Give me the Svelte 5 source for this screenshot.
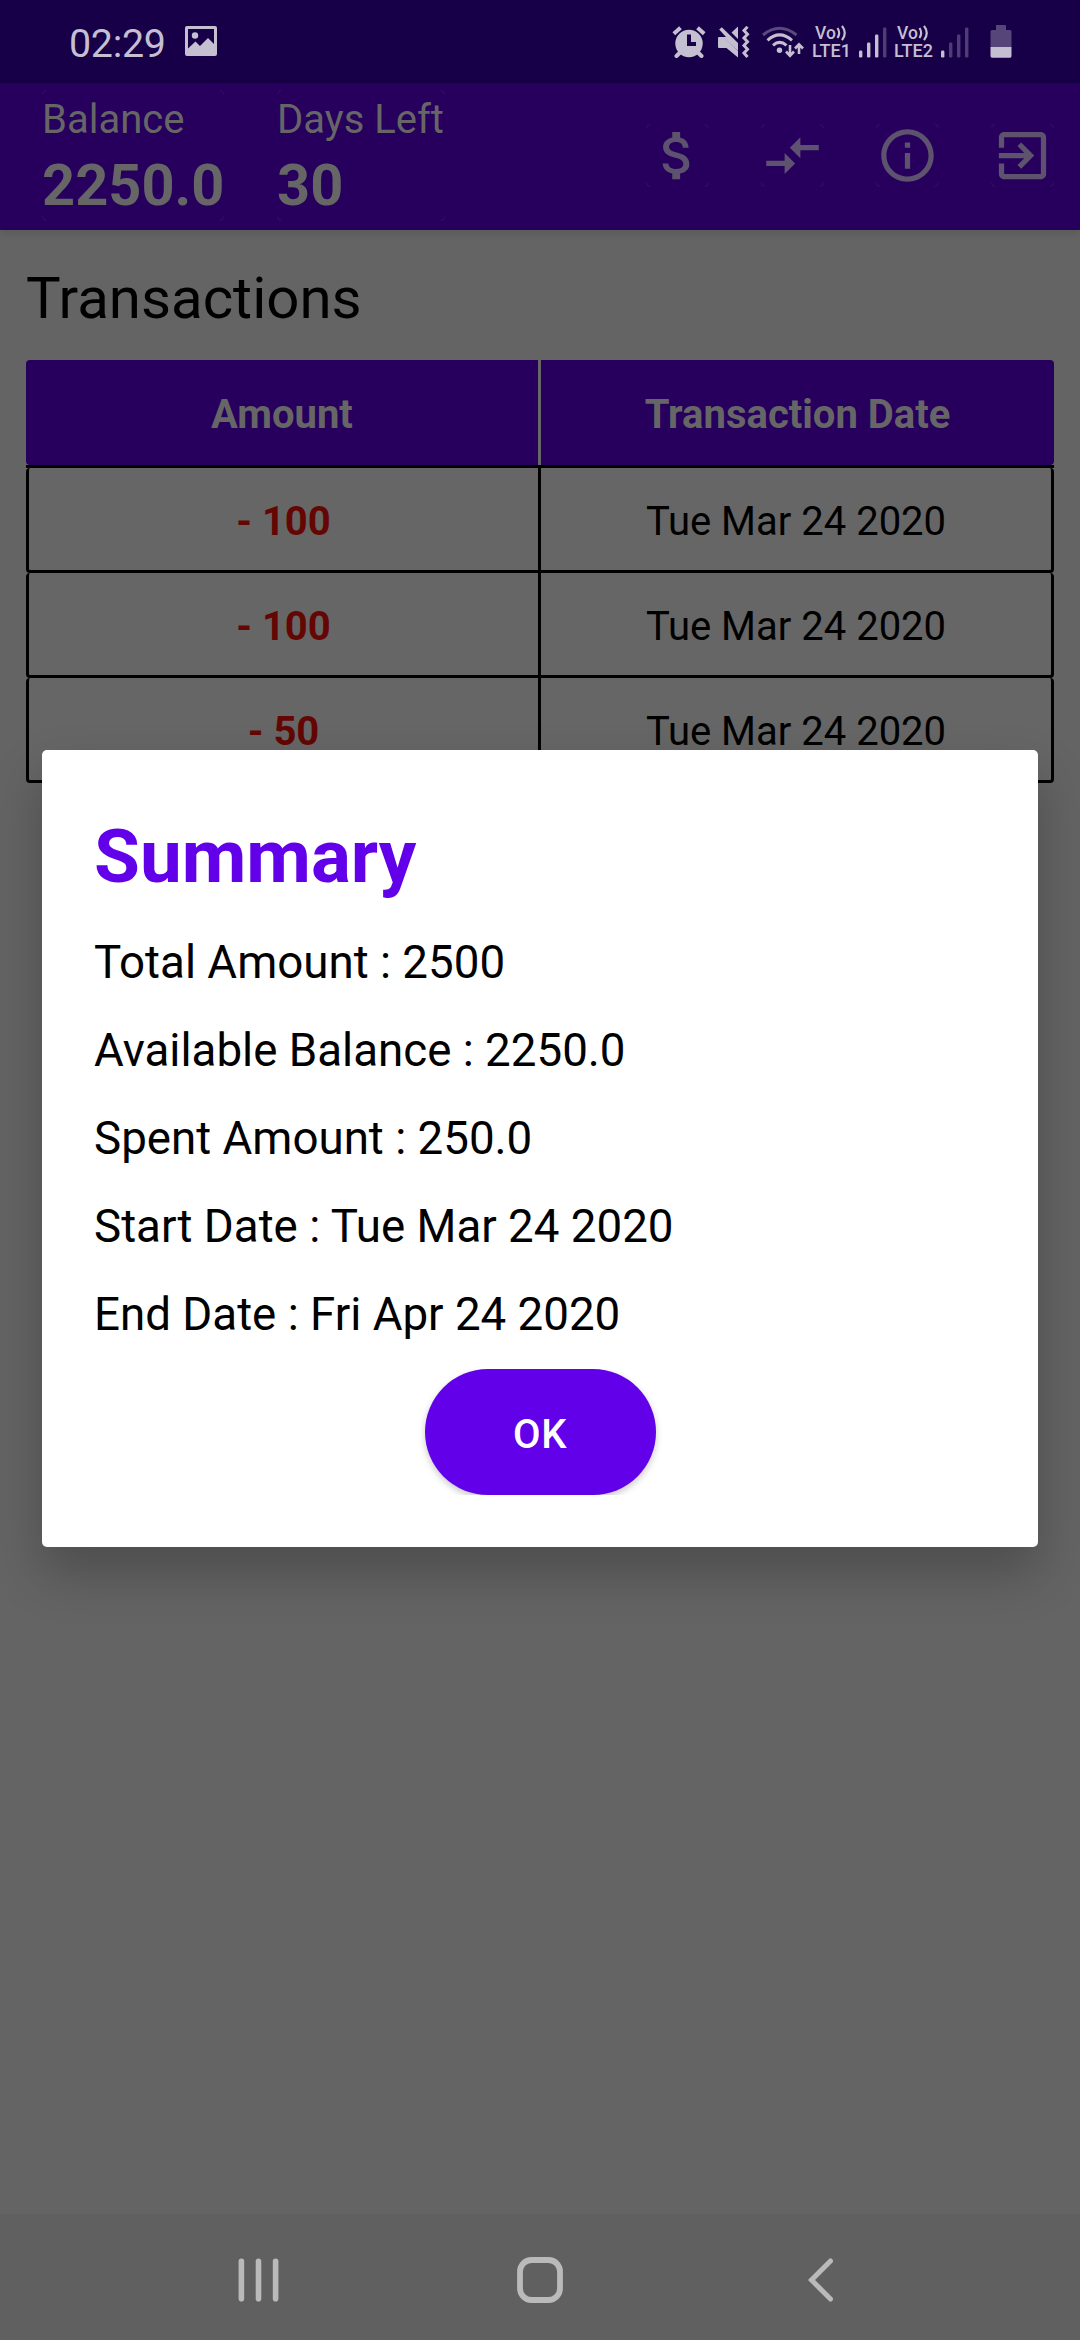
<script>
  const actions = [
    { name: 'Add amount', path: 'M11.8 10.9c-2.27-.59-3-1.2-3-2.15 0-1.09 1.01-1.85 2.7-1.85 1.78 0 2.44.85 2.5 2.1h2.21c-.07-1.72-1.12-3.3-3.21-3.81V3h-3v2.16c-1.94.42-3.5 1.68-3.5 3.61 0 2.31 1.91 3.46 4.7 4.13 2.5.6 3 1.48 3 2.41 0 .69-.49 1.79-2.7 1.79-2.06 0-2.87-.92-2.98-2.1h-2.2c.12 2.19 1.76 3.42 3.68 3.83V21h3v-2.15c1.95-.37 3.5-1.5 3.5-3.55 0-2.84-2.43-3.81-4.7-4.4z' },
    { name: 'Compare', path: 'M9.01 14H2v2h7.01v3L13 15l-3.99-4v3zm5.98-1v-3H22V8h-7.01V5L11 9l3.99 4z' },
    { name: 'Summary', path: 'M11 7h2v2h-2zm0 4h2v6h-2zm1-9C6.48 2 2 6.48 2 12s4.48 10 10 10 10-4.48 10-10S17.52 2 12 2zm0 18c-4.41 0-8-3.59-8-8s3.59-8 8-8 8 3.59 8 8-3.59 8-8 8z' },
    { name: 'Exit', path: 'M10.09 15.59L11.5 17l5-5-5-5-1.41 1.41L12.67 11H3v2h9.67l-2.58 2.59zM19 3H5c-1.11 0-2 .9-2 2v4h2V5h14v14H5v-4H3v4c0 1.1.89 2 2 2h14c1.1 0 2-.9 2-2V5c0-1.1-.9-2-2-2z' }
  ];
  const rows = [
    { amount: '- 100', date: 'Tue Mar 24 2020' },
    { amount: '- 100', date: 'Tue Mar 24 2020' },
    { amount: '- 50', date: 'Tue Mar 24 2020' }
  ];
  const summary = [
    'Total Amount : 2500',
    'Available Balance : 2250.0',
    'Spent Amount : 250.0',
    'Start Date : Tue Mar 24 2020',
    'End Date : Fri Apr 24 2020'
  ];
  const sims = [
    { label: 'LTE1', strength: 3 },
    { label: 'LTE2', strength: 1 }
  ];
</script>

{#snippet corners(w, h)}
  <svg class="corners" width={w} height={h} viewBox="0 0 {w} {h}" aria-hidden="true">
    <path d="M.5 4.5Q.5 .5 4.5 .5M{w - 4.5} .5Q{w - 0.5} .5 {w - 0.5} 4.5M{w - 0.5} {h - 4.5}Q{w - 0.5} {h - 0.5} {w - 4.5} {h - 0.5}M4.5 {h - 0.5}Q.5 {h - 0.5} .5 {h - 4.5}" />
  </svg>
{/snippet}

<div class="screen">
  <header class="status">
    <span class="time">02:29</span>
    <svg class="picture" width="32" height="30" viewBox="0 0 32 30">
      <path fill-rule="evenodd" d="M2 0H30Q32 0 32 2V28Q32 30 30 30H2Q0 30 0 28V2Q0 0 2 0ZM3 3V22.500L10.500 15.500L15 20L23 12L29 18V3Z" />
      <circle cx="10" cy="9.500" r="3.200" />
    </svg>
    <svg class="alarm" width="34" height="32" viewBox="0 0 34 32">
      <circle cx="17" cy="17.500" r="13.700" />
      <g class="line" stroke-width="4"><path d="M1.800 7.800L8.500 1.800M32.200 7.800L25.500 1.800" /><path d="M8.500 26L4.500 30M25.500 26L29.500 30" stroke-linecap="round" /></g>
      <path class="cut" d="M17 8.500V18H24" />
    </svg>
    <svg class="mute" width="32" height="32" viewBox="0 0 32 32">
      <path d="M0 12Q0 11 1 11H5.500L20 25V31.500L8.500 22H1Q0 22 0 21ZM20 .500V13L13.500 6.500Z" />
      <path d="M1.200 3.600L3.800 1.200L20 17V25L5 11H8Z" />
      <path class="line" stroke-width="3" d="M29.500 .800L26 4.500L29.500 8.300L26 12L29.500 15.800L26 19.500L29.500 23.200L26 27L29.500 31" />
    </svg>
    <svg class="wifi" width="42" height="32" viewBox="0 0 42 32">
      <g class="line" stroke-width="3"><path opacity=".38" d="M1 9Q17.500 -4.500 34.500 9" /><path d="M5.500 14.300Q17.500 3.500 30 14.300M11 19.300Q17.500 13.500 24.500 19.300" /></g>
      <circle cx="17.500" cy="24.200" r="2.700" />
      <path class="line" stroke-width="2.600" d="M28 19V29.500M24 25.500L28 29.800L32 25.500M37 28V18.500M33 22.500L37 18.300L41 22.500" />
    </svg>
    {#each sims as sim}
      <div class="lte">
        <div class="vo">Vo<svg width="11" height="16" viewBox="0 0 11 16"><path class="line" stroke-width="2.200" d="M1.500 3Q4.800 8 1.500 13M6 .800Q11.500 8 6 15.200" /></svg></div>
        <div class="gen">{sim.label}</div>
      </div>
      <svg class="signal" width="28" height="31" viewBox="0 0 28 31">
        {#each [7, 15, 23, 30] as h, i}
          <rect x={i * 8} y={30.5 - h} width="3.400" height={h} rx="1.300" opacity={i < sim.strength ? 1 : 0.32} />
        {/each}
      </svg>
    {/each}
    <svg class="battery" width="22" height="33" viewBox="0 0 22 33">
      <path opacity=".36" d="M6 0H15Q16 0 16 1V5H20Q21.500 5 21.500 6.500V22H.500V6.500Q.500 5 2 5H6Z" />
      <path d="M.500 22H21.500V31Q21.500 32.700 20 32.700H2Q.500 32.700 .500 31Z" />
    </svg>
  </header>

  <nav class="toolbar">
    <div class="stat balance">
      <span>Balance</span><strong>2250.0</strong>
      {@render corners(182, 131)}
    </div>
    <div class="stat days">
      <span>Days Left</span><strong>30</strong>
      {@render corners(168, 131)}
    </div>
    <div class="actions">
      {#each actions as action}
        <div class="action">
          <svg width="63" height="63" viewBox="0 0 24 24" role="img" aria-label={action.name}><path d={action.path} /></svg>
          {@render corners(63, 63)}
        </div>
      {/each}
    </div>
  </nav>

  <main>
    <h1>Transactions</h1>
    <div class="row head"><div>Amount</div><div>Transaction Date</div></div>
    <div class="body">
      {#each rows as row}
        <div class="row"><div class="amount">{row.amount}</div><div>{row.date}</div></div>
      {/each}
    </div>
  </main>

  <footer>
    <svg width="42" height="44" viewBox="0 0 42 44"><path stroke-width="5.600" stroke-linecap="round" d="M3.400 3.300V40.700M20.500 3.300V40.700M37.600 3.300V40.700" /></svg>
    <svg width="46" height="46" viewBox="0 0 46 46"><rect x="3" y="3" width="40" height="40" rx="11.500" stroke-width="5.800" /></svg>
    <svg width="27" height="44" viewBox="0 0 27 44"><path stroke-width="5" stroke-linecap="round" d="M23.500 3L4.500 22L23.500 41" /></svg>
  </footer>

  <section class="dialog">
    <h2>Summary</h2>
    {#each summary as line}
      <p>{line}</p>
    {/each}
    <div class="button-area"><button>OK</button></div>
  </section>
</div>

<style>
  :global(body) { background: #646464; }
  .screen {
    position: relative;
    display: flex;
    flex-direction: column;
    width: 1080px;
    height: 2340px;
    overflow: hidden;
    background: #646464;
    color: #000;
    font-family: Roboto, "Liberation Sans", sans-serif;
    font-size: 40px;
  }
  svg { display: block; flex: none; }
  h1, h2, p { margin: 0; font-weight: 400; }

  .status {
    display: flex;
    box-sizing: border-box;
    height: 83px;
    padding-left: 69px;
    background: #170047;
    color: #c5bfd2;
    flex: none;
  }
  .status > svg { margin-top: 26px; fill: #c5bfd2; }
  .line { fill: none; stroke: #c5bfd2; }
  .cut { fill: none; stroke: #170047; stroke-width: 4px; }
  .time { width: 116px; line-height: 87px; font-size: 39.4px; letter-spacing: -.3px; white-space: nowrap; }
  .alarm { margin-left: 455px; }
  .mute { margin-left: 12px; }
  .wifi { margin-left: 12px; }
  .lte { width: 40px; margin-left: 8px; padding-top: 24px; font-weight: 500; }
  .status .signal { margin: 27px 0 0 7px; }
  .signal + .lte { margin-left: 7px; }
  .vo { display: flex; height: 17px; padding-left: 3px; font-size: 17.500px; line-height: 18px; }
  .vo svg { margin-top: 1px; }
  .gen { font-size: 18px; line-height: 20px; }
  .status .battery { margin: 25px 0 0 21px; }

  .toolbar {
    display: flex;
    flex: none;
    box-sizing: border-box;
    height: 147px;
    padding: 7px 26px 0 42px;
    background: #27005e;
    color: #666;
    box-shadow: 0 2px 9px rgba(0, 0, 0, .14);
  }
  .stat { position: relative; display: flex; flex-direction: column; height: 131px; white-space: nowrap; }
  .balance { width: 182px; }
  .days { width: 168px; margin-left: 53px; }
  .stat span { height: 59px; line-height: 59px; }
  .stat strong { font-size: 57.750px; line-height: 73px; }
  .corners { position: absolute; left: 0; top: 0; fill: none; stroke: #666; stroke-opacity: .17; }
  .actions { display: flex; gap: 52px; margin: 34px 0 0 auto; }
  .action { position: relative; width: 63px; height: 63px; fill: #5e536e; }

  main { padding: 0 26px; }
  h1 { height: 130px; line-height: 137px; font-size: 58.2px; }
  .row { display: grid; grid-template-columns: 512px 513px; column-gap: 3px; height: 105px; line-height: 107px; text-align: center; border-radius: 4px; }
  .head { background: linear-gradient(90deg, #27005e 512px, #666 512px, #666 515px, #27005e 515px); color: #666; font-weight: 700; line-height: 109px; }
  .body { border-top: 3px solid #000; }
  .body .row {
    box-sizing: border-box;
    grid-template-columns: 509px 510px;
    border: solid #000;
    border-width: 0 3px 3px;
    background: linear-gradient(90deg, #666 509px, #000 509px, #000 512px, #666 512px);
  }
  .amount { color: #630604; font-weight: 700; }

  footer {
    display: flex;
    align-items: center;
    gap: 237px;
    height: 126px;
    margin-top: auto;
    box-sizing: border-box;
    padding: 5px 0 0 238px;
    background: #606060;
  }
  footer svg { fill: none; stroke: #bababa; }
  footer svg:last-child { margin-left: 7px; }

  .dialog {
    position: absolute;
    left: 42px;
    top: 750px;
    width: 996px;
    height: 797px;
    box-sizing: border-box;
    padding: 53px 52px 0;
    border-radius: 5px;
    background: #fff;
    box-shadow: 0 26px 52px rgba(0, 0, 0, .24);
  }
  h2 { height: 114px; line-height: 108px; color: #6200ea; font-size: 74.6px; font-weight: 700; }
  p { height: 88px; line-height: 91px; font-size: 45.7px; white-space: nowrap; }
  .button-area { display: flex; justify-content: center; height: 126px; margin-top: 12px; padding: 0 20px; overflow: hidden; }
  button {
    width: 231px;
    height: 126px;
    padding: 5px 0 0;
    border: 0;
    border-radius: 63px;
    background: #6200ea;
    color: #fff;
    font: 500 40px/120px Roboto, sans-serif;
    letter-spacing: .5px;
    box-shadow: 0 3px 7px rgba(0, 0, 0, .22);
  }
</style>
